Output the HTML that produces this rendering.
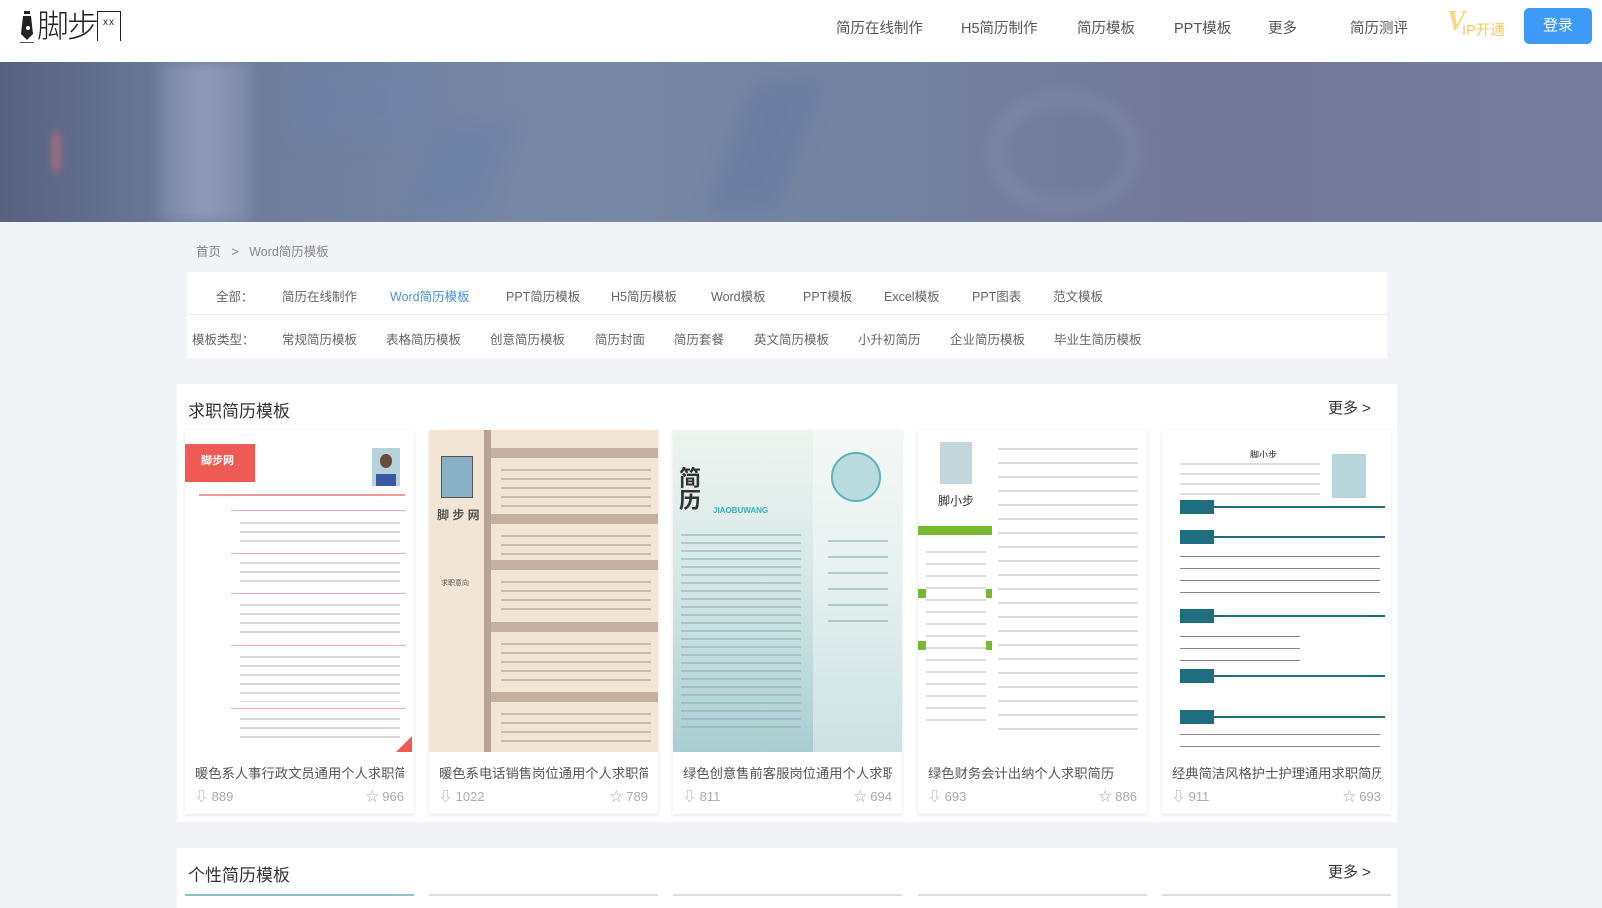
<!DOCTYPE html>
<html><head><meta charset="utf-8"><style>
*{margin:0;padding:0;box-sizing:border-box}
body{width:1602px;height:896px;overflow:hidden;background:#f2f3f7;font-family:"Liberation Sans","Noto Sans CJK SC",sans-serif;position:relative}
.a{position:absolute;white-space:nowrap}
.hdr{position:absolute;left:0;top:0;width:1602px;height:62px;background:#fff}
.nav{font-size:14.5px;color:#555;top:17px}
.banner{position:absolute;left:0;top:62px;width:1602px;height:160px;background:linear-gradient(90deg,#56617f 0%,#6e7b9b 12%,#7987a6 35%,#7482a1 55%,#73789a 75%,#767d9c 100%);overflow:hidden}
.banner div{position:absolute}
.f{font-size:12.5px;color:#666}
.box{position:absolute;background:#fff}
.card{position:absolute;top:430px;width:229px;height:384px;background:#fff;box-shadow:0 1px 3px rgba(0,0,0,.12)}
.img{position:absolute;left:0;top:0;width:229px;height:322px;overflow:hidden}
.ct{position:absolute;left:10px;top:333px;font-size:13.3px;color:#555;width:209px;overflow:hidden;white-space:nowrap}
.st{position:absolute;top:356px;font-size:13px;color:#aaa}
</style></head><body>
<div class="hdr"></div>
<div class="a" style="left:20px;top:10px;width:12px;height:30px">
<svg width="14" height="34" viewBox="0 0 14 34"><rect x="4" y="1" width="6" height="3" fill="#222"/><path d="M3 6h8l2 18-6 6-6-6z" fill="#222"/><circle cx="8" cy="18" r="2" fill="#fff"/><rect x="0" y="32" width="14" height="1" fill="#555"/></svg></div>
<div class="a" style="left:37px;top:6px;font-size:32px;color:#222;letter-spacing:-2px;font-weight:300;line-height:40px">脚步<span style="display:inline-block;width:24px;height:30px;border:1.5px solid #222;border-bottom:none;font-size:10px;vertical-align:top;margin-top:5px;text-align:center;line-height:22px;letter-spacing:1px">xx</span></div>
<div class="a nav" style="left:836px">简历在线制作</div>
<div class="a nav" style="left:961px">H5简历制作</div>
<div class="a nav" style="left:1077px">简历模板</div>
<div class="a nav" style="left:1174px">PPT模板</div>
<div class="a nav" style="left:1268px">更多</div>
<div class="a nav" style="left:1350px">简历测评</div>
<div class="a" style="left:1447px;top:6px;font-size:28px;font-weight:bold;font-style:italic;color:#ffd37a;font-family:'Liberation Serif',serif">V</div>
<div class="a" style="left:1462px;top:19px;font-size:14.5px;color:#ffc85a">IP开通</div>
<div class="a" style="left:1524px;top:8px;width:68px;height:36px;background:#3d9bf7;border-radius:5px;color:#fff;font-size:15px;text-align:center;line-height:36px">登录</div>

<div class="banner">
<div style="left:160px;top:0;width:90px;height:160px;background:linear-gradient(90deg,#7a86a6,#8f9ab8,#7e89a8);filter:blur(6px)"></div>
<div style="left:52px;top:70px;width:8px;height:40px;background:#a4707e;filter:blur(4px)"></div>
<div style="left:290px;top:0;width:140px;height:80px;background:#6e82a8;filter:blur(10px);opacity:.6"></div>
<div style="left:420px;top:60px;width:80px;height:90px;background:#6a80a8;filter:blur(10px);opacity:.6;transform:skewX(-20deg)"></div>
<div style="left:730px;top:20px;width:70px;height:130px;background:#667aa2;filter:blur(10px);opacity:.6;transform:skewX(-20deg)"></div>
<div style="left:990px;top:30px;width:150px;height:120px;border-radius:50%;border:12px solid #8089a8;filter:blur(8px);opacity:.7"></div>
</div>

<div class="a" style="left:196px;top:241px;font-size:12.5px;color:#888">首页 &nbsp;&nbsp;&gt;&nbsp;&nbsp; Word简历模板</div>

<div class="box" style="left:187px;top:272px;width:1200px;height:86px"></div>
<div class="a" style="left:187px;top:314px;width:1200px;height:1px;background:#ececec"></div>
<div class="a f" style="left:216px;top:286px">全部：</div>
<div class="a f" style="left:282px;top:286px">简历在线制作</div>
<div class="a f" style="left:390px;top:286px;color:#4a90e2">Word简历模板</div>
<div class="a f" style="left:506px;top:286px">PPT简历模板</div>
<div class="a f" style="left:611px;top:286px">H5简历模板</div>
<div class="a f" style="left:711px;top:286px">Word模板</div>
<div class="a f" style="left:803px;top:286px">PPT模板</div>
<div class="a f" style="left:884px;top:286px">Excel模板</div>
<div class="a f" style="left:972px;top:286px">PPT图表</div>
<div class="a f" style="left:1053px;top:286px">范文模板</div>
<div class="a f" style="left:192px;top:329px">模板类型：</div>
<div class="a f" style="left:282px;top:329px">常规简历模板</div>
<div class="a f" style="left:386px;top:329px">表格简历模板</div>
<div class="a f" style="left:490px;top:329px">创意简历模板</div>
<div class="a f" style="left:595px;top:329px">简历封面</div>
<div class="a f" style="left:674px;top:329px">简历套餐</div>
<div class="a f" style="left:754px;top:329px">英文简历模板</div>
<div class="a f" style="left:858px;top:329px">小升初简历</div>
<div class="a f" style="left:950px;top:329px">企业简历模板</div>
<div class="a f" style="left:1054px;top:329px">毕业生简历模板</div>

<div class="box" style="left:177px;top:384px;width:1220px;height:438px"></div>
<div class="a" style="left:188px;top:397px;font-size:17px;color:#333">求职简历模板</div>
<div class="a" style="left:1328px;top:397px;font-size:15px;color:#333">更多 &gt;</div>

<!-- card 1 -->
<div class="card" style="left:185px"><div class="img">
<div class="a" style="left:0;top:14px;width:70px;height:38px;background:#f05a55"></div>
<div class="a" style="left:16px;top:22px;color:#fff;font-size:11px;font-weight:bold">脚步网</div>
<div class="a" style="left:187px;top:18px;width:28px;height:38px;background:#b6d3dc"></div>
<div class="a" style="left:195px;top:24px;width:12px;height:14px;border-radius:50%;background:#6b4b3a"></div>
<div class="a" style="left:191px;top:44px;width:20px;height:12px;background:#3a5aa0"></div>
<div class="a" style="left:14px;top:64px;width:206px;height:2px;background:#f29a96"></div>
<div class="a" style="left:46px;top:80px;width:175px;background:#f5b0ad;height:1px"></div>
<div class="a" style="left:46px;top:123px;width:175px;background:#f5b0ad;height:1px"></div>
<div class="a" style="left:46px;top:163px;width:175px;background:#f5b0ad;height:1px"></div>
<div class="a" style="left:46px;top:215px;width:175px;background:#f5b0ad;height:1px"></div>
<div class="a" style="left:46px;top:278px;width:175px;background:#f5b0ad;height:1px"></div>
<div class="a" style="left:55px;top:88px;width:160px;height:30px;background:repeating-linear-gradient(#fff 0 4px,#d8d8d8 4px 6px,#fff 6px 9px)"></div>
<div class="a" style="left:55px;top:128px;width:160px;height:30px;background:repeating-linear-gradient(#fff 0 4px,#d8d8d8 4px 6px,#fff 6px 9px)"></div>
<div class="a" style="left:55px;top:170px;width:160px;height:40px;background:repeating-linear-gradient(#fff 0 4px,#d8d8d8 4px 6px,#fff 6px 9px)"></div>
<div class="a" style="left:55px;top:222px;width:160px;height:50px;background:repeating-linear-gradient(#fff 0 4px,#d8d8d8 4px 6px,#fff 6px 9px)"></div>
<div class="a" style="left:55px;top:284px;width:160px;height:28px;background:repeating-linear-gradient(#fff 0 4px,#d8d8d8 4px 6px,#fff 6px 9px)"></div>
<div class="a" style="left:209px;top:306px;width:0;height:0;border-left:18px solid transparent;border-bottom:18px solid #f05a55"></div>
</div><div class="ct">暖色系人事行政文员通用个人求职简历</div>
<div class="st" style="left:10px">⇩ 889</div><div class="st" style="right:10px">☆ 966</div></div>

<!-- card 2 -->
<div class="card" style="left:429px"><div class="img" style="background:#f3e5d6">
<div class="a" style="left:55px;top:0;width:7px;height:322px;background:#b6a497"></div>
<div class="a" style="left:62px;top:18px;width:167px;height:10px;background:#c4b0a0"></div>
<div class="a" style="left:62px;top:84px;width:167px;height:10px;background:#c4b0a0"></div>
<div class="a" style="left:62px;top:130px;width:167px;height:10px;background:#c4b0a0"></div>
<div class="a" style="left:62px;top:192px;width:167px;height:10px;background:#c4b0a0"></div>
<div class="a" style="left:62px;top:262px;width:167px;height:10px;background:#c4b0a0"></div>
<div class="a" style="left:12px;top:26px;width:32px;height:42px;background:#8ab0c6;border:1px solid #555"></div>
<div class="a" style="left:8px;top:76px;font-size:12px;color:#555;font-weight:bold">脚 步 网</div>
<div class="a" style="left:12px;top:148px;font-size:7px;color:#555">求职意向</div>
<div class="a" style="left:72px;top:34px;width:150px;height:44px;background:repeating-linear-gradient(#f3e5d6 0 5px,#cbbcb0 5px 7px,#f3e5d6 7px 9px)"></div>
<div class="a" style="left:72px;top:100px;width:150px;height:26px;background:repeating-linear-gradient(#f3e5d6 0 5px,#cbbcb0 5px 7px,#f3e5d6 7px 9px)"></div>
<div class="a" style="left:72px;top:146px;width:150px;height:40px;background:repeating-linear-gradient(#f3e5d6 0 5px,#cbbcb0 5px 7px,#f3e5d6 7px 9px)"></div>
<div class="a" style="left:72px;top:208px;width:150px;height:48px;background:repeating-linear-gradient(#f3e5d6 0 5px,#cbbcb0 5px 7px,#f3e5d6 7px 9px)"></div>
<div class="a" style="left:72px;top:278px;width:150px;height:40px;background:repeating-linear-gradient(#f3e5d6 0 5px,#cbbcb0 5px 7px,#f3e5d6 7px 9px)"></div>
</div><div class="ct">暖色系电话销售岗位通用个人求职简历</div>
<div class="st" style="left:10px">⇩ 1022</div><div class="st" style="right:10px">☆ 789</div></div>

<!-- card 3 -->
<div class="card" style="left:673px"><div class="img" style="background:linear-gradient(180deg,#eef4f0 0%,#d6e8e6 45%,#aacdd1 100%)">
<div class="a" style="left:140px;top:0;width:89px;height:322px;background:rgba(255,255,255,.4)"></div>
<div class="a" style="left:6px;top:38px;font-size:22px;color:#333;line-height:22px;font-weight:bold">简<br>历</div>
<div class="a" style="left:40px;top:76px;font-size:8px;color:#3ab0b8;font-weight:bold">JIAOBUWANG</div>
<div class="a" style="left:158px;top:22px;width:50px;height:50px;border-radius:50%;background:#b9dade;border:2px solid #5ab4b8"></div>
<div class="a" style="left:8px;top:100px;width:120px;height:200px;background:repeating-linear-gradient(transparent 0 4px,#8fb3bb 4px 6px,transparent 6px 8px);opacity:.6"></div>
<div class="a" style="left:155px;top:100px;width:60px;height:100px;background:repeating-linear-gradient(transparent 0 10px,#9bb8be 10px 12px,transparent 12px 16px);opacity:.7"></div>
</div><div class="ct">绿色创意售前客服岗位通用个人求职简历</div>
<div class="st" style="left:10px">⇩ 811</div><div class="st" style="right:10px">☆ 694</div></div>

<!-- card 4 -->
<div class="card" style="left:918px"><div class="img">
<div class="a" style="left:22px;top:12px;width:32px;height:42px;background:#c3d6da"></div>
<div class="a" style="left:20px;top:62px;font-size:12px;color:#333">脚小步</div>
<div class="a" style="left:0;top:96px;width:74px;height:9px;background:#78b932"></div>
<div class="a" style="left:0;top:159px;width:74px;height:9px;background:#78b932"></div>
<div class="a" style="left:0;top:211px;width:74px;height:9px;background:#78b932"></div>
<div class="a" style="left:80px;top:12px;width:140px;height:300px;background:repeating-linear-gradient(#fff 0 6px,#dcdcdc 6px 8px,#fff 8px 14px)"></div>
<div class="a" style="left:8px;top:115px;width:60px;height:180px;background:repeating-linear-gradient(#fff 0 6px,#dcdcdc 6px 8px,#fff 8px 12px)"></div>
</div><div class="ct">绿色财务会计出纳个人求职简历</div>
<div class="st" style="left:10px">⇩ 693</div><div class="st" style="right:10px">☆ 886</div></div>

<!-- card 5 -->
<div class="card" style="left:1162px"><div class="img">
<div class="a" style="left:88px;top:18px;font-size:9px;color:#222">脚小步</div>
<div class="a" style="left:170px;top:24px;width:34px;height:44px;background:#b9d5dc"></div>
<div class="a" style="left:18px;top:28px;width:140px;height:40px;background:repeating-linear-gradient(#fff 0 5px,#ddd 5px 7px,#fff 7px 10px)"></div>
<div class="a" style="left:18px;top:76px;width:205px;height:2px;background:#1e6e80"></div>
<div class="a" style="left:18px;top:106px;width:205px;height:2px;background:#1e6e80"></div>
<div class="a" style="left:18px;top:185px;width:205px;height:2px;background:#1e6e80"></div>
<div class="a" style="left:18px;top:245px;width:205px;height:2px;background:#1e6e80"></div>
<div class="a" style="left:18px;top:286px;width:205px;height:2px;background:#1e6e80"></div>
<div class="a" style="left:18px;top:70px;width:34px;height:14px;background:#1e6e80"></div>
<div class="a" style="left:18px;top:100px;width:34px;height:14px;background:#1e6e80"></div>
<div class="a" style="left:18px;top:179px;width:34px;height:14px;background:#1e6e80"></div>
<div class="a" style="left:18px;top:239px;width:34px;height:14px;background:#1e6e80"></div>
<div class="a" style="left:18px;top:280px;width:34px;height:14px;background:#1e6e80"></div>
<div class="a" style="left:18px;top:120px;width:200px;height:50px;background:repeating-linear-gradient(#fff 0 6px,#888 6px 7px,#fff 7px 12px)"></div>
<div class="a" style="left:18px;top:200px;width:120px;height:35px;background:repeating-linear-gradient(#fff 0 6px,#888 6px 7px,#fff 7px 12px)"></div>
<div class="a" style="left:18px;top:298px;width:200px;height:24px;background:repeating-linear-gradient(#fff 0 6px,#888 6px 7px,#fff 7px 12px)"></div>
</div><div class="ct">经典简洁风格护士护理通用求职简历</div>
<div class="st" style="left:10px">⇩ 911</div><div class="st" style="right:10px">☆ 693</div></div>

<div class="box" style="left:177px;top:848px;width:1220px;height:60px"></div>
<div class="a" style="left:188px;top:861px;font-size:17px;color:#333">个性简历模板</div>
<div class="a" style="left:1328px;top:861px;font-size:15px;color:#333">更多 &gt;</div>
<div class="a" style="left:185px;top:894px;width:229px;height:2px;background:#8cc4c8"></div>
<div class="a" style="left:429px;top:894px;width:229px;height:2px;background:#ddd"></div>
<div class="a" style="left:673px;top:894px;width:229px;height:2px;background:#ddd"></div>
<div class="a" style="left:918px;top:894px;width:229px;height:2px;background:#ddd"></div>
<div class="a" style="left:1162px;top:894px;width:229px;height:2px;background:#ddd"></div>
</body></html>
